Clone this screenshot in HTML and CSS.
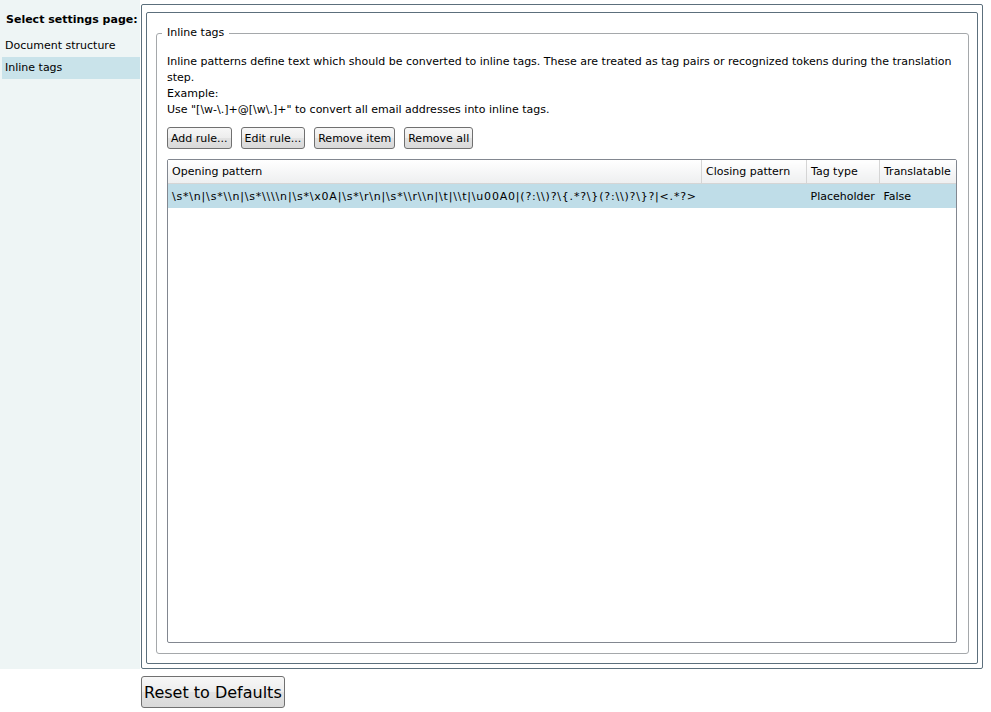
FILE: index.html
```html
<!DOCTYPE html>
<html lang="en">
<head>
    <meta charset="UTF-8">
    <title>Settings</title>
    <link rel="stylesheet" href="styles.css">
</head>
<body>
    <div class="top">
        <div class="sidebar">
            <p class="sidebar-title">Select settings page:</p>
            <div class="page-item">Document structure</div>
            <div class="page-item selected">Inline tags</div>
        </div>
        <div class="outer">
            <div class="inner">
                <fieldset class="group">
                    <legend>Inline tags</legend>
                    <div class="group-body">
                        <p class="desc">Inline patterns define text which should be converted to inline tags. These are treated as tag pairs or recognized tokens during the translation step.<br>Example:<br>Use "[\w-\.]+@[\w\.]+" to convert all email addresses into inline tags.</p>
                        <div class="buttons">
                            <button class="btn">Add rule...</button>
                            <button class="btn">Edit rule...</button>
                            <button class="btn">Remove item</button>
                            <button class="btn">Remove all</button>
                        </div>
                        <div class="grid">
                            <table>
                                <thead>
                                    <tr>
                                        <th class="col-open">Opening pattern</th>
                                        <th class="col-close">Closing pattern</th>
                                        <th class="col-type">Tag type</th>
                                        <th class="col-trans">Translatable</th>
                                    </tr>
                                </thead>
                                <tbody>
                                    <tr class="selected">
                                        <td class="pattern">\s*\n|\s*\\n|\s*\\\\n|\s*\x0A|\s*\r\n|\s*\\r\\n|\t|\\t|\u00A0|(?:\\)?\{.*?\}(?:\\)?\}?|&lt;.*?&gt;</td>
                                        <td></td>
                                        <td>Placeholder</td>
                                        <td>False</td>
                                    </tr>
                                </tbody>
                            </table>
                        </div>
                    </div>
                </fieldset>
            </div>
        </div>
    </div>
    <div class="footer">
        <button class="btn reset">Reset to Defaults</button>
    </div>
</body>
</html>
```
FILE: styles.css
```css
body {
    margin: 0;
    font-family: "DejaVu Sans", Verdana, sans-serif;
    font-size: 11px;
    color: #000;
    background: #fff;
}
.top {
    display: flex;
    height: 669px;
}
.sidebar {
    width: 140px;
    background-color: #eef5f5;
    padding-top: 13px;
}
.sidebar-title {
    margin: 0 0 9px 6px;
    font-weight: bold;
    line-height: 13px;
}
.page-item {
    height: 22px;
    line-height: 22px;
    margin-left: 2px;
    padding-left: 3px;
}
.page-item.selected {
    background-color: #c9e3ea;
}
.outer {
    flex: 1;
    margin: 4px 8px 0 1px;
    border: 1px solid #5c6f7c;
    border-radius: 2px;
    display: flex;
}
.inner {
    flex: 1;
    margin: 7px 4px 4px 4px;
    border: 1px solid #5c6f7c;
    border-radius: 2px;
    display: flex;
}
.group {
    flex: 1;
    margin: 12px 8px 9px 9px;
    padding: 0 11px 10px 10px;
    border: 1px solid #a5a8ab;
    border-radius: 3px;
    min-width: 0;
    display: flex;
    flex-direction: column;
}
.group legend {
    padding: 0 5px;
    margin-left: -5px;
    line-height: 16px;
}
.group-body {
    flex: 1;
    display: flex;
    flex-direction: column;
}
.desc {
    margin: 13px 0 0 0;
    line-height: 16px;
}
.buttons {
    display: flex;
    gap: 9px;
    margin-top: 9px;
}
.btn {
    font-family: inherit;
    font-size: 11px;
    height: 22px;
    padding: 0 3px;
    border: 1px solid #707070;
    border-radius: 3px;
    background: linear-gradient(#f7f7f7 0%, #ededed 50%, #e2e2e2 51%, #d9d9d9 100%);
    color: #000;
}
.grid {
    flex: 1;
    margin-top: 10px;
    border: 1px solid #828790;
    border-radius: 2px;
    background: #fff;
}
.grid table {
    width: 100%;
    border-collapse: collapse;
}
.grid th {
    height: 23px;
    padding: 0 4px;
    text-align: left;
    font-weight: normal;
    background: linear-gradient(#ffffff, #eeeff0);
    border-right: 1px solid #d5d5d5;
    border-bottom: 1px solid #d5d5d5;
}
.grid th:last-child {
    border-right: none;
}
.grid td {
    height: 24px;
    padding: 0 4px;
    white-space: nowrap;
}
.grid td.pattern {
    letter-spacing: 0.8px;
}
.grid tr.selected td {
    background-color: #bfdde8;
}
.col-open {
    width: 525px;
}
.col-close {
    width: 96px;
}
.col-type {
    width: 64px;
}
.footer {
    padding: 7px 0 0 141px;
}
.btn.reset {
    font-size: 16px;
    height: 32px;
    padding: 0 2px;
}
```
